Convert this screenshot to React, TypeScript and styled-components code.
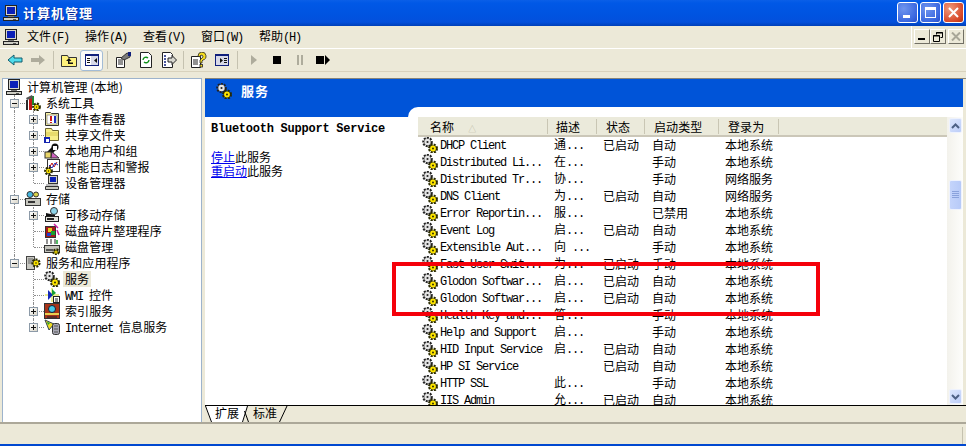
import React from "react";
import styled, { createGlobalStyle } from "styled-components";

const GlobalStyle = createGlobalStyle`
  html, body {
    margin: 0;
    padding: 0;
    background: #ece9d8;
    overflow: hidden;
  }
  * {
    box-sizing: border-box;
  }
`;

const Window = styled.div`
  position: relative;
  width: 966px;
  height: 446px;
  display: flex;
  flex-direction: column;
  overflow: hidden;
  background: #ece9d8;
  color: #000;
  font: 12px/14px "Noto Sans CJK SC", "Liberation Sans", sans-serif;
`;

const TitleBar = styled.div`
  height: 26px;
  flex: none;
  display: flex;
  align-items: center;
  padding: 0 2px 1px 3px;
  background: linear-gradient(#0a5fe8 0%, #0058e6 12%, #0053e0 60%, #0350dc 85%, #0040b8 100%);
`;

const TitleText = styled.div`
  flex: 1;
  margin-left: 4px;
  color: #fff;
  font-size: 13px;
  font-weight: 700;
  letter-spacing: 1px;
  text-shadow: 1px 1px 0 #0a2f9a;
`;

const CaptionButton = styled.div<{ $close?: boolean }>`
  width: 21px;
  height: 21px;
  margin-left: 2px;
  border: 1px solid #fff;
  border-radius: 3px;
  display: flex;
  align-items: center;
  justify-content: center;
  background: ${(p) =>
    p.$close
      ? "radial-gradient(circle at 30% 30%, #ef9a7c, #d8492a 70%, #b8320f)"
      : "radial-gradient(circle at 30% 30%, #6f95ee, #3b68e0 70%, #2a4fc8)"};
`;

const MenuBar = styled.div`
  height: 23px;
  flex: none;
  display: flex;
  align-items: center;
  padding-left: 3px;
  border-bottom: 1px solid #fff;
`;

const MenuItem = styled.div`
  width: 58px;
  white-space: nowrap;
`;

const MenuIconSlot = styled.div`
  width: 24px;
  display: flex;
`;

const MdiGroup = styled.div`
  margin-left: auto;
  height: 22px;
  padding: 3px 2px 0 2px;
  display: flex;
  align-items: flex-start;
  border-left: 1px solid #fff;
`;

const MdiButton = styled.div<{ $gap?: number }>`
  width: 16px;
  height: 15px;
  margin-left: ${(p) => p.$gap ?? 0}px;
  display: flex;
  align-items: center;
  justify-content: center;
  background: #ece9d8;
  border: 1px solid;
  border-color: #fff #716f64 #716f64 #fff;
`;

const ToolBar = styled.div`
  height: 23px;
  flex: none;
  display: flex;
  align-items: center;
  padding-left: 3px;
  border-bottom: 1px solid #d8d2bd;
`;

const ToolButton = styled.div<{ $active?: boolean }>`
  width: 23px;
  height: 21px;
  display: flex;
  align-items: center;
  justify-content: center;
  border: 1px solid ${(p) => (p.$active ? "#a3bcd6" : "transparent")};
  border-radius: 3px;
  background: ${(p) => (p.$active ? "#fbfbf8" : "transparent")};
`;

const ToolSeparator = styled.div<{ $width: number }>`
  width: ${(p) => p.$width}px;
  height: 18px;
  display: flex;
  justify-content: center;
  &::before {
    content: "";
    width: 1px;
    background: #c5c2b0;
  }
`;

const Body = styled.div`
  height: 344px;
  flex: none;
  margin-top: 6px;
  display: flex;
  padding-left: 2px;
`;

const TreePane = styled.div`
  width: 200px;
  flex: none;
  background: #fff;
  border: 1px solid #9db3cc;
  border-bottom: none;
  overflow: hidden;
`;

const TreeRow = styled.div<{ $root?: boolean }>`
  height: 16px;
  display: flex;
  align-items: center;
  padding-left: ${(p) => (p.$root ? 3 : 2)}px;
  white-space: nowrap;
`;

const Guide = styled.div<{ $line?: "through" | "end"; $branch?: boolean }>`
  position: relative;
  width: 19px;
  height: 16px;
  flex: none;
  display: flex;
  align-items: center;
  justify-content: center;
  &::before {
    content: "";
    display: ${(p) => (p.$line ? "block" : "none")};
    position: absolute;
    left: 9px;
    top: 0;
    height: ${(p) => (p.$line === "end" ? 8 : 16)}px;
    border-left: 1px dotted #8e8e8e;
  }
  &::after {
    content: "";
    display: ${(p) => (p.$branch ? "block" : "none")};
    position: absolute;
    left: 10px;
    top: 8px;
    width: 10px;
    border-top: 1px dotted #8e8e8e;
  }
`;

const Expander = styled.div<{ $open?: boolean }>`
  position: relative;
  z-index: 1;
  width: 9px;
  height: 9px;
  margin-left: -1px;
  border: 1px solid #8c9aa8;
  background:
    linear-gradient(#111, #111) center / 5px 1px no-repeat,
    ${(p) => (p.$open ? "" : "linear-gradient(#111, #111) center / 1px 5px no-repeat,")}
    linear-gradient(135deg, #fff, #d9d5c8);
`;

const TreeLabel = styled.div<{ $selected?: boolean }>`
  margin-left: 3px;
  padding: 0 2px;
  height: 16px;
  line-height: 16px;
  letter-spacing: 0.1px;
  background: ${(p) => (p.$selected ? "#ece9d8" : "transparent")};
`;

const TreeIconSlot = styled.div`
  width: 16px;
  height: 16px;
  margin-left: 1px;
  flex: none;
`;

const Detail = styled.div`
  flex: 1;
  min-width: 0;
  margin-left: 3px;
  display: flex;
  flex-direction: column;
  border-top: 1px solid #86847a;
`;

const Sheet = styled.div`
  flex: 1;
  min-height: 0;
  margin-right: 3px;
  display: flex;
  flex-direction: column;
  background: #0054d8;
`;

const Banner = styled.div`
  height: 28px;
  flex: none;
  display: flex;
  align-items: center;
  padding: 0 0 4px 11px;
  color: #fff;
  font-size: 13px;
  font-weight: 700;
  letter-spacing: 1px;
`;

const BannerTitle = styled.div`
  margin-left: 9px;
`;

const Extended = styled.div`
  flex: 1;
  min-height: 0;
  display: flex;
`;

const TaskColumn = styled.div`
  width: 203px;
  flex: none;
  margin-top: 10px;
  padding: 5px 6px;
  background: #fff;
`;

const ServiceHeading = styled.div`
  height: 14px;
  font: 700 12px/14px "Liberation Mono", monospace;
  letter-spacing: -0.24px;
  white-space: nowrap;
`;

const TaskLines = styled.div`
  margin-top: 14px;
  line-height: 14px;
`;

const TaskLink = styled.a`
  color: #0000ee;
  text-decoration: underline;
`;

const ListSheet = styled.div`
  flex: 1;
  min-width: 0;
  display: flex;
  padding: 10px 0 0 10px;
  background: #fff;
  border-top-left-radius: 10px;
`;

const ListTable = styled.div`
  flex: 1;
  min-width: 0;
  overflow: hidden;
`;

const columns = "130px 49px 48px 74px 60px";

const ListHeader = styled.div`
  height: 20px;
  display: grid;
  grid-template-columns: ${columns};
  align-items: center;
  background: #ebeadb;
  border-bottom: 2px solid #cbc7b8;
`;

const HeaderCell = styled.div<{ $pad: number }>`
  position: relative;
  height: 15px;
  line-height: 15px;
  padding-left: ${(p) => p.$pad}px;
  border-right: 1px solid #c9c6b4;
  letter-spacing: 0.1px;
  white-space: nowrap;
`;

const SortMark = styled.span`
  margin-left: 14px;
  color: #bdbaa8;
  font-size: 8px;
`;

const ListRow = styled.div`
  height: 17px;
  padding-bottom: 1px;
  display: grid;
  grid-template-columns: ${columns};
  align-items: center;
  white-space: nowrap;
`;

const NameCell = styled.div`
  display: flex;
  align-items: center;
  padding-left: 4px;
`;

const NameText = styled.div`
  margin-left: 2px;
`;

const Cell = styled.div<{ $pad: number }>`
  padding-left: ${(p) => p.$pad}px;
`;

const Latin = styled.span`
  font-family: "Liberation Mono", monospace;
  font-size: 12px;
  letter-spacing: -1.2px;
`;

const ScrollBar = styled.div`
  width: 16px;
  flex: none;
  padding: 1px 1px 1px 2px;
  display: flex;
  flex-direction: column;
  background: linear-gradient(90deg, #f3f2ec, #fdfdfb);
`;

const ScrollButton = styled.div`
  height: 15px;
  flex: none;
  display: flex;
  align-items: center;
  justify-content: center;
  border: 1px solid #eef2fd;
  border-radius: 2px;
  background: linear-gradient(135deg, #dde7fd, #bccdf8);
`;

const ScrollThumb = styled.div`
  height: 30px;
  flex: none;
  margin-top: 47px;
  display: flex;
  align-items: center;
  justify-content: center;
  border: 1px solid #eef2fd;
  border-radius: 2px;
  background: linear-gradient(90deg, #c4d4fb, #b7caf8);
`;

const ScrollSpacer = styled.div`
  flex: 1;
`;

const TabStrip = styled.div`
  height: 17px;
  flex: none;
  display: flex;
  border-top: 1px solid #000;
  background: #ece9d8;
`;

const Tab = styled.div<{ $active?: boolean; $width: number }>`
  width: ${(p) => p.$width}px;
  height: 16px;
  line-height: 14px;
  background: ${(p) => (p.$active ? "#fff" : "transparent")};
`;

const StatusBar = styled.div`
  height: 22px;
  flex: none;
  display: flex;
  justify-content: flex-end;
  padding: 3px 3px 0 0;
  border-top: 2px solid #aca899;
`;

const StatusDivider = styled.div`
  width: 1px;
  height: 17px;
  background: #c5c2b0;
`;

const BottomEdge = styled.div`
  flex: 1;
  background: #0048d0;
`;

const RedFrame = styled.div`
  position: absolute;
  left: 392px;
  top: 262px;
  width: 428px;
  height: 54px;
  border: 4px solid #f5000a;
`;

// mixes the CJK face with a narrow monospace for ascii runs
const mixed = (text: string) =>
  text.split(/([\x20-\x7e]+)/).map((part, i) =>
    i % 2 ? <Latin key={i}>{part}</Latin> : part
  );

const Px = styled.svg`
  display: block;
  flex: none;
`;

function Glyph({ children }: { children: React.ReactNode }) {
  return (
    <Px width={16} height={16} viewBox="0 0 16 16">
      {children}
    </Px>
  );
}

// teeth are a dashed ring: dark halo first, then the body colour on top
function Cog({ x, y, r, fill, edge }: { x: number; y: number; r: number; fill: string; edge: string }) {
  return (
    <>
      <circle cx={x} cy={y} r={r + 0.9} fill="none" stroke={edge} strokeWidth={2.2} strokeDasharray="2 1.1" />
      <circle cx={x} cy={y} r={r + 0.3} fill={edge} />
      <circle cx={x} cy={y} r={r - 0.1} fill={fill} />
      <circle cx={x} cy={y} r={r * 0.32} fill={edge} />
    </>
  );
}

const Gears = () => (
  <Glyph>
    <Cog x={5.5} y={5} r={3.3} fill="#e4e4e4" edge="#222" />
    <Cog x={11} y={11.5} r={3} fill="#ffe600" edge="#2a2a00" />
  </Glyph>
);

const Computer = () => (
  <Glyph>
    <rect x="2.5" y="0.5" width="11" height="10" fill="#d5d5cc" stroke="#222" />
    <rect x="4" y="2" width="8" height="7" fill="#0a1fb8" />
    <rect x="5" y="11" width="6" height="1" fill="#777" />
    <rect x="0.5" y="12.5" width="15" height="3" fill="#cfcfc6" stroke="#222" />
    <rect x="10" y="14" width="3" height="1" fill="#555" />
  </Glyph>
);

const Tools = () => (
  <Glyph>
    <rect x="1" y="5" width="2" height="10" fill="#2c2c2c" />
    <rect x="4" y="2" width="3" height="13" fill="#c21818" />
    <rect x="7" y="1" width="2" height="9" fill="#1c8c2c" />
    <path d="M1 3l6-3 1 3-6 2z" fill="#555" />
    <Cog x={11.5} y={12} r={2.4} fill="#ffe600" edge="#2a2a00" />
  </Glyph>
);

const EventLog = () => (
  <Glyph>
    <path d="M1.5 1.5h5l1 1h7v12h-13z" fill="#fbf4a8" stroke="#333" />
    <rect x="3" y="4" width="10" height="9" fill="#fff" stroke="#666" strokeWidth="0.6" />
    <rect x="6" y="5" width="2" height="5" fill="#d01818" />
    <rect x="6" y="11" width="2" height="1" fill="#d01818" />
    <rect x="10" y="5" width="2" height="7" fill="#1a2cc0" />
  </Glyph>
);

const SharedFolder = () => (
  <Glyph>
    <path d="M1.5 1.5h6l1 2h6v10h-13z" fill="#f7ee88" stroke="#6c6430" />
    <path d="M2 6h12M2 8h12" stroke="#d8c850" />
    <rect x="0" y="10" width="6" height="6" fill="#1424b0" />
    <rect x="2" y="12" width="3" height="3" fill="#fff" />
  </Glyph>
);

const Users = () => (
  <Glyph>
    <circle cx="11" cy="4" r="3.5" fill="#111" />
    <path d="M3 9l8-8 2 4-6 8z" fill="#111" />
    <rect x="9" y="3" width="4" height="4" fill="#fff" />
    <rect x="1" y="9" width="6" height="6" fill="#e8d468" stroke="#333" />
    <path d="M8 9l7 6H7z" fill="#d060c0" stroke="#333" />
  </Glyph>
);

const PerfLog = () => (
  <Glyph>
    <rect x="3.5" y="0.5" width="12" height="12" fill="#fff" stroke="#333" />
    <path d="M5 9l3-5 2 4 3-5" stroke="#c01010" fill="none" />
    <path d="M5 6l3 3 3-5 3 2" stroke="#1a28c0" fill="none" />
    <Cog x={4.5} y={12} r={2.4} fill="#ffe600" edge="#2a2a00" />
  </Glyph>
);

const DeviceManager = () => (
  <Glyph>
    <rect x="4.5" y="0.5" width="9" height="8" fill="#d5d5cc" stroke="#333" />
    <rect x="6" y="2" width="6" height="5" fill="#0a1fb8" />
    <path d="M1.5 11.5h13v3h-13z" fill="#c9c9c0" stroke="#333" />
    <path d="M2 10h12" stroke="#777" />
  </Glyph>
);

const Storage = () => (
  <Glyph>
    <circle cx="5" cy="3.5" r="3" fill="#43b6e0" stroke="#333" />
    <circle cx="11" cy="3.5" r="2.5" fill="#d9d34a" stroke="#333" />
    <rect x="0.5" y="7.5" width="15" height="7" fill="#c8c8c0" stroke="#333" />
    <rect x="3" y="10" width="7" height="2" fill="#333" />
  </Glyph>
);

const Removable = () => (
  <Glyph>
    <circle cx="10" cy="4" r="3.5" fill="#8ed4e8" stroke="#333" />
    <path d="M2 6l9 2v3l-9-2z" fill="#111" />
    <rect x="1.5" y="9.5" width="13" height="5" fill="#e4e4dc" stroke="#222" />
    <rect x="3" y="11" width="7" height="2" fill="#222" />
  </Glyph>
);

const Defrag = () => (
  <Glyph>
    <rect x="1.5" y="3.5" width="10" height="11" fill="#a81818" stroke="#333" />
    <rect x="4" y="5" width="4" height="4" fill="#e0d020" />
    <rect x="7" y="8" width="4" height="4" fill="#18a030" />
    <rect x="3" y="10" width="4" height="3" fill="#2040d0" />
    <path d="M10 1l4 4M13 7l2 5" stroke="#d020a0" strokeWidth="1.5" />
  </Glyph>
);

const DiskManager = () => (
  <Glyph>
    <path d="M3 0v5M7 0v5M11 0v5" stroke="#222" />
    <path d="M13 1v4" stroke="#18a030" strokeWidth="1.5" />
    <rect x="0.5" y="6.5" width="15" height="7" fill="#c4c4bc" stroke="#333" />
    <rect x="2" y="10" width="7" height="2" fill="#555" />
    <Cog x={12} y={13} r={1.7} fill="#ffe600" edge="#2a2a00" />
  </Glyph>
);

const ServicesApps = () => (
  <Glyph>
    <rect x="1.5" y="1.5" width="8" height="13" fill="#c8c8c2" stroke="#444" />
    <path d="M3 4h5M3 6h5M3 8h5" stroke="#666" />
    <Cog x={11} y={8} r={2.6} fill="#ffe600" edge="#2a2a00" />
  </Glyph>
);

const WmiControl = () => (
  <Glyph>
    <path d="M8 1v14M1 8h14" stroke="#d8d820" />
    <path d="M4 3l5 5-5 5z" fill="#1428b8" />
    <path d="M8 2l4 4-4 3z" fill="#18a030" />
    <rect x="9.5" y="9.5" width="6" height="6" fill="#fff" stroke="#222" />
    <path d="M11 12h3M11 14h3" stroke="#222" />
  </Glyph>
);

const IndexService = () => (
  <Glyph>
    <rect x="0.5" y="0.5" width="15" height="15" fill="#a83418" stroke="#333" />
    <circle cx="8" cy="6" r="3.5" fill="#46c8e8" stroke="#123" />
    <rect x="1" y="10" width="14" height="2" fill="#e8d050" />
    <path d="M3 14h10" stroke="#123" />
  </Glyph>
);

const InternetServer = () => (
  <Glyph>
    <path d="M1 1l9 4-5 6z" fill="#f0dc20" stroke="#345" />
    <path d="M3 3l3 1-2 2z" fill="#18a030" />
    <rect x="8.5" y="4.5" width="7" height="11" rx="2" fill="#a8a8b4" stroke="#333" />
    <path d="M10 7h4M10 10h4M10 13h4" stroke="#555" />
  </Glyph>
);

const FolderUp = () => (
  <Glyph>
    <path d="M0.5 3.5h6l1 2h8v9h-15z" fill="#fff27c" stroke="#333" />
    <path d="M8 6l-3 3h2v3h5v-1.5H8.5V9h2z" fill="#111" />
  </Glyph>
);

const PaneToggle = ({ flip }: { flip?: boolean }) => (
  <Glyph>
    <rect x="1.5" y="2.5" width="13" height="11" fill={flip ? "#d7d9e8" : "#fff"} stroke="#10207c" />
    <rect x="1" y="2" width="14" height="2" fill="#10207c" />
    {flip ? (
      <>
        <path d="M6 6l3 2.5L6 11z" fill="#111" />
        <rect x="10" y="6" width="3" height="1" fill="#111" />
        <rect x="10" y="8" width="3" height="1" fill="#111" />
        <rect x="10" y="10" width="3" height="1" fill="#111" />
      </>
    ) : (
      <>
        <rect x="3" y="6" width="3" height="1" fill="#111" />
        <rect x="3" y="8" width="3" height="1" fill="#111" />
        <rect x="3" y="10" width="3" height="1" fill="#111" />
        <rect x="7" y="4" width="7" height="9" fill="#d7d9e8" />
        <path d="M13 6l-3 2.5 3 2.5z" fill="#111" />
      </>
    )}
  </Glyph>
);

const Properties = () => (
  <Glyph>
    <path d="M1.5 5.5h8v10h-8z" fill="#fff" stroke="#222" />
    <path d="M3 8h5M3 10h5M3 12h5" stroke="#222" />
    <path d="M6 6l6-5 3 1v3l-6 3z" fill="#7a7a78" stroke="#333" />
    <rect x="13" y="0" width="3" height="4" fill="#10207c" />
  </Glyph>
);

const Refresh = () => (
  <Glyph>
    <path d="M2.5 0.5h8l3 3v12h-11z" fill="#fff" stroke="#222" />
    <path d="M5 8a3 3 0 0 1 5-2M11 8a3 3 0 0 1-5 2" fill="none" stroke="#109018" strokeWidth="1.4" />
  </Glyph>
);

const ExportList = () => (
  <Glyph>
    <path d="M1.5 0.5h8l2 2v13h-10z" fill="#fff" stroke="#222" />
    <path d="M3 4h2M3 7h2M3 10h2M3 13h2" stroke="#10207c" strokeWidth="1.4" />
    <path d="M7 6h4V3.5L15.5 8 11 12.5V10H7z" fill="#d8d8d0" stroke="#222" />
  </Glyph>
);

const HelpBook = () => (
  <Glyph>
    <path d="M0.5 4.5h9v11h-9z" fill="#fff" stroke="#222" />
    <path d="M2 8h5M2 10h5M2 12h5" stroke="#222" />
    <path d="M7 4a4 4 0 1 1 5 4l-1 1v2H9V8l2-2a1.5 1.5 0 1 0-2-1z" fill="#f8e020" stroke="#222" strokeWidth="0.8" />
    <rect x="9" y="12.5" width="2.5" height="2.5" fill="#f8e020" stroke="#222" strokeWidth="0.8" />
  </Glyph>
);

const rows: [string, string, string, string, string][] = [
  ["DHCP Client", "通...", "已启动", "自动", "本地系统"],
  ["Distributed Li...", "在...", "", "手动", "本地系统"],
  ["Distributed Tr...", "协...", "", "手动", "网络服务"],
  ["DNS Client", "为...", "已启动", "自动", "网络服务"],
  ["Error Reportin...", "服...", "", "已禁用", "本地系统"],
  ["Event Log", "启...", "已启动", "自动", "本地系统"],
  ["Extensible Aut...", "向 ...", "", "手动", "本地系统"],
  ["Fast User Swit...", "为...", "已启动", "手动", "本地系统"],
  ["Glodon Softwar...", "启...", "已启动", "自动", "本地系统"],
  ["Glodon Softwar...", "启...", "已启动", "自动", "本地系统"],
  ["Health Key and...", "答...", "", "手动", "本地系统"],
  ["Help and Support", "启...", "", "手动", "本地系统"],
  ["HID Input Service", "启...", "已启动", "自动", "本地系统"],
  ["HP SI Service", "", "已启动", "自动", "本地系统"],
  ["HTTP SSL", "此...", "", "手动", "本地系统"],
  ["IIS Admin", "允...", "已启动", "自动", "本地系统"],
];

type TreeNode = {
  label: string;
  icon: React.ReactNode;
  guides: ("none" | "through" | "branch" | "end")[];
  expander?: "plus" | "minus";
  selected?: boolean;
};

const tree: TreeNode[] = [
  { label: "系统工具", icon: <Tools />, guides: ["branch"], expander: "minus" },
  { label: "事件查看器", icon: <EventLog />, guides: ["through", "branch"], expander: "plus" },
  { label: "共享文件夹", icon: <SharedFolder />, guides: ["through", "branch"], expander: "plus" },
  { label: "本地用户和组", icon: <Users />, guides: ["through", "branch"], expander: "plus" },
  { label: "性能日志和警报", icon: <PerfLog />, guides: ["through", "branch"], expander: "plus" },
  { label: "设备管理器", icon: <DeviceManager />, guides: ["through", "end"] },
  { label: "存储", icon: <Storage />, guides: ["branch"], expander: "minus" },
  { label: "可移动存储", icon: <Removable />, guides: ["through", "branch"], expander: "plus" },
  { label: "磁盘碎片整理程序", icon: <Defrag />, guides: ["through", "branch"] },
  { label: "磁盘管理", icon: <DiskManager />, guides: ["through", "end"] },
  { label: "服务和应用程序", icon: <ServicesApps />, guides: ["end"], expander: "minus" },
  { label: "服务", icon: <Gears />, guides: ["none", "branch"], selected: true },
  { label: "WMI 控件", icon: <WmiControl />, guides: ["none", "branch"] },
  { label: "索引服务", icon: <IndexService />, guides: ["none", "branch"], expander: "plus" },
  { label: "Internet 信息服务", icon: <InternetServer />, guides: ["none", "end"], expander: "plus" },
];

function TreeItem({ node }: { node: TreeNode }) {
  const last = node.guides.length - 1;
  return (
    <TreeRow>
      {node.guides.map((g, i) => (
        <Guide
          key={i}
          $line={g === "none" ? undefined : g === "end" ? "end" : "through"}
          $branch={i === last}
        >
          {i === last && node.expander && <Expander $open={node.expander === "minus"} />}
        </Guide>
      ))}
      <TreeIconSlot>{node.icon}</TreeIconSlot>
      <TreeLabel $selected={node.selected}>{mixed(node.label)}</TreeLabel>
    </TreeRow>
  );
}

const menus = ["文件(F)", "操作(A)", "查看(V)", "窗口(W)", "帮助(H)"];

export default function App() {
  return (
    <Window>
      <GlobalStyle />
      <TitleBar>
        <Computer />
        <TitleText>计算机管理</TitleText>
        <CaptionButton>
          <svg width="13" height="13" viewBox="0 0 13 13">
            <rect x="2" y="9" width="7" height="3" fill="#fff" />
          </svg>
        </CaptionButton>
        <CaptionButton>
          <svg width="13" height="13" viewBox="0 0 13 13">
            <rect x="1.5" y="1.5" width="10" height="10" fill="none" stroke="#fff" />
            <rect x="1" y="1" width="11" height="3" fill="#fff" />
          </svg>
        </CaptionButton>
        <CaptionButton $close>
          <svg width="13" height="13" viewBox="0 0 13 13">
            <path d="M2 2l9 9M11 2l-9 9" stroke="#fff" strokeWidth="2" />
          </svg>
        </CaptionButton>
      </TitleBar>

      <MenuBar>
        <MenuIconSlot>
          <Computer />
        </MenuIconSlot>
        {menus.map((m) => (
          <MenuItem key={m}>{mixed(m)}</MenuItem>
        ))}
        <MdiGroup>
          <MdiButton>
            <svg width="10" height="9" viewBox="0 0 10 9">
              <rect x="1" y="6" width="7" height="2" fill="#000" />
            </svg>
          </MdiButton>
          <MdiButton>
            <svg width="10" height="10" viewBox="0 0 10 10">
              <path d="M3.5 2.5V0.5h6v5h-2M0.5 3.5h6v6h-6z" fill="none" stroke="#000" />
              <path d="M3 1h7M0 4h7" stroke="#000" />
            </svg>
          </MdiButton>
          <MdiButton $gap={2}>
            <svg width="10" height="9" viewBox="0 0 10 9">
              <path d="M1 0.5l8 8M9 0.5l-8 8" stroke="#a8a698" strokeWidth="2" />
            </svg>
          </MdiButton>
        </MdiGroup>
      </MenuBar>

      <ToolBar>
        <ToolButton>
          <Glyph>
            <path d="M1 8l6-5v3h8v4H7v3z" fill="#4fdcec" stroke="#125c6c" />
          </Glyph>
        </ToolButton>
        <ToolButton>
          <Glyph>
            <path d="M15 8L9 3v3H1v4h8v3z" fill="#aeac9c" />
          </Glyph>
        </ToolButton>
        <ToolSeparator $width={8} />
        <ToolButton>
          <FolderUp />
        </ToolButton>
        <ToolButton $active>
          <PaneToggle />
        </ToolButton>
        <ToolSeparator $width={8} />
        <ToolButton>
          <Properties />
        </ToolButton>
        <ToolButton>
          <Refresh />
        </ToolButton>
        <ToolButton>
          <ExportList />
        </ToolButton>
        <ToolSeparator $width={7} />
        <ToolButton>
          <HelpBook />
        </ToolButton>
        <ToolButton>
          <PaneToggle flip />
        </ToolButton>
        <ToolSeparator $width={9} />
        <ToolButton>
          <Glyph>
            <path d="M5 3l6 5-6 5z" fill="#aeac9c" />
          </Glyph>
        </ToolButton>
        <ToolButton>
          <Glyph>
            <rect x="4" y="4" width="8" height="8" fill="#000" />
          </Glyph>
        </ToolButton>
        <ToolButton>
          <Glyph>
            <rect x="5" y="3" width="2" height="10" fill="#aeac9c" />
            <rect x="9" y="3" width="2" height="10" fill="#aeac9c" />
          </Glyph>
        </ToolButton>
        <ToolButton>
          <Glyph>
            <rect x="1" y="4" width="8" height="8" fill="#000" />
            <path d="M10 3l5 5-5 5z" fill="#000" />
          </Glyph>
        </ToolButton>
      </ToolBar>

      <Body>
        <TreePane>
          <TreeRow $root>
            <Computer />
            <TreeLabel>计算机管理 (本地)</TreeLabel>
          </TreeRow>
          {tree.map((node) => (
            <TreeItem key={node.label} node={node} />
          ))}
        </TreePane>

        <Detail>
          <Sheet>
            <Banner>
              <Gears />
              <BannerTitle>服务</BannerTitle>
            </Banner>
            <Extended>
              <TaskColumn>
                <ServiceHeading>Bluetooth Support Service</ServiceHeading>
                <TaskLines>
                  <div>
                    <TaskLink>停止</TaskLink>此服务
                  </div>
                  <div>
                    <TaskLink>重启动</TaskLink>此服务
                  </div>
                </TaskLines>
              </TaskColumn>
              <ListSheet>
                <ListTable>
                  <ListHeader>
                    <HeaderCell $pad={12}>
                      名称<SortMark>△</SortMark>
                    </HeaderCell>
                    <HeaderCell $pad={8}>描述</HeaderCell>
                    <HeaderCell $pad={9}>状态</HeaderCell>
                    <HeaderCell $pad={9}>启动类型</HeaderCell>
                    <HeaderCell $pad={9}>登录为</HeaderCell>
                  </ListHeader>
                  {rows.map(([name, desc, state, startup, logon], i) => (
                    <ListRow key={i}>
                      <NameCell>
                        <Gears />
                        <NameText>
                          <Latin>{name}</Latin>
                        </NameText>
                      </NameCell>
                      <Cell $pad={6}>{mixed(desc)}</Cell>
                      <Cell $pad={6}>{state}</Cell>
                      <Cell $pad={7}>{startup}</Cell>
                      <Cell $pad={6}>{logon}</Cell>
                    </ListRow>
                  ))}
                </ListTable>
                <ScrollBar>
                  <ScrollButton>
                    <svg width="9" height="6" viewBox="0 0 9 6">
                      <path d="M1 5l3.5-3.5L8 5" fill="none" stroke="#4d6185" strokeWidth="2" />
                    </svg>
                  </ScrollButton>
                  <ScrollThumb>
                    <svg width="7" height="8" viewBox="0 0 7 8">
                      <path d="M0 0.5h7M0 2.5h7M0 4.5h7M0 6.5h7" stroke="#8aa2dc" />
                    </svg>
                  </ScrollThumb>
                  <ScrollSpacer />
                  <ScrollButton>
                    <svg width="9" height="6" viewBox="0 0 9 6">
                      <path d="M1 1l3.5 3.5L8 1" fill="none" stroke="#4d6185" strokeWidth="2" />
                    </svg>
                  </ScrollButton>
                </ScrollBar>
              </ListSheet>
            </Extended>
          </Sheet>
          <TabStrip>
            <svg width="10" height="16" viewBox="0 0 10 16">
              <path d="M0 0h10v16H6z" fill="#fff" />
              <path d="M0.5 0L6.5 16" stroke="#000" />
            </svg>
            <Tab $active $width={27}>扩展</Tab>
            <svg width="11" height="16" viewBox="0 0 11 16">
              <path d="M0 0h5.5L1 16H0z" fill="#fff" />
              <path d="M5.5 0L0.5 16M2.5 5l4 11" stroke="#000" fill="none" />
            </svg>
            <Tab $width={26}>标准</Tab>
            <svg width="10" height="16" viewBox="0 0 10 16">
              <path d="M8 0L0.5 16" stroke="#000" />
            </svg>
          </TabStrip>
        </Detail>
      </Body>

      <StatusBar>
        <StatusDivider />
      </StatusBar>
      <BottomEdge />
      <RedFrame />
    </Window>
  );
}
